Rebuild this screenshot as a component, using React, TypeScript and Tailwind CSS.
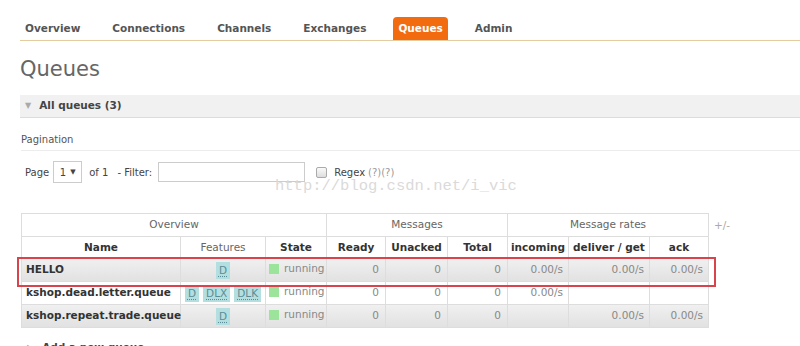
import React from 'react';

const tabs = ['Overview', 'Connections', 'Channels', 'Exchanges', 'Queues', 'Admin'];

type Queue = {
  name: string;
  features: string[];
  ready: number;
  unacked: number;
  total: number;
  incoming: string;
  deliver: string;
  ack: string;
};

const queues: Queue[] = [
  { name: 'HELLO', features: ['D'], ready: 0, unacked: 0, total: 0, incoming: '0.00/s', deliver: '0.00/s', ack: '0.00/s' },
  { name: 'kshop.dead.letter.queue', features: ['D', 'DLX', 'DLK'], ready: 0, unacked: 0, total: 0, incoming: '0.00/s', deliver: '', ack: '' },
  { name: 'kshop.repeat.trade.queue', features: ['D'], ready: 0, unacked: 0, total: 0, incoming: '', deliver: '0.00/s', ack: '0.00/s' },
];

function Badge({ label }: { label: string }) {
  return (
    <span className="inline-block bg-[#b3dfe0] text-[#5b8c95] px-[3px] leading-[17px] mx-[2px]">
      <span className="underline decoration-dotted underline-offset-2">{label}</span>
    </span>
  );
}

export default function App() {
  return (
    <div className="relative w-[800px] h-[346px] overflow-hidden bg-white text-[#555] font-['DejaVu_Sans',sans-serif]">
      {/* top navigation */}
      <div className="ml-[20px] mt-[17px] flex items-end gap-[22px] h-[24px] border-b border-[#e3cc9f]">
        {tabs.map((t) => (
          <div
            key={t}
            className={
              t === 'Queues'
                ? 'h-[23px] px-[5px] flex items-center rounded-t-[4px] bg-[#f26b0f] text-white text-[10.5px] font-bold'
                : 'h-[23px] px-[5px] flex items-center text-[#555] text-[10.5px] font-bold'
            }
          >
            {t}
          </div>
        ))}
      </div>

      <h1 className="ml-[20px] mt-[16px] text-[21px] leading-[24px] text-[#666] font-normal">Queues</h1>

      {/* section header */}
      <div className="ml-[20px] mt-[14px] h-[23px] flex items-center bg-[#f1f1f1] border-b border-[#dcdcdc]">
        <span className="ml-[5px] text-[#aaa] text-[8px]">▼</span>
        <span className="ml-[8px] text-[10.5px] font-bold text-[#444]">All queues (3)</span>
      </div>

      <div className="ml-[21px] mt-[14px] pb-[3px] text-[10px] text-[#555] border-b border-[#ececec]">Pagination</div>

      {/* pagination row */}
      <div className="ml-[25px] mt-[10px] flex items-center text-[10px] text-[#444] h-[22px]">
        <span>Page</span>
        <div className="ml-[4px] w-[29px] h-[22px] border border-[#ccc] flex items-center justify-center gap-[4px]">
          <span>1</span>
          <span className="text-[7px]">▼</span>
        </div>
        <span className="ml-[7px]">of 1</span>
        <span className="ml-[9px]">- Filter:</span>
        <div className="ml-[6px] w-[147px] h-[20px] border border-[#ccc]" />
        <div className="ml-[11px] w-[11px] h-[11px] rounded-[2px] border border-[#aaa] bg-gradient-to-b from-[#fafafa] to-[#ddd]" />
        <span className="ml-[7px]">Regex</span>
        <span className="ml-[3px] text-[#999]">(?)(?)</span>
      </div>

      {/* table */}
      <div className="ml-[21px] mt-[30px] flex items-start">
        <table className="border-collapse table-fixed w-[687px] text-[10.5px]">
          <colgroup>
            <col className="w-[159px]" />
            <col className="w-[85px]" />
            <col className="w-[61px]" />
            <col className="w-[59px]" />
            <col className="w-[62px]" />
            <col className="w-[60px]" />
            <col className="w-[61px]" />
            <col className="w-[81px]" />
            <col className="w-[59px]" />
          </colgroup>
          <thead>
            <tr className="h-[23px] text-[#666]">
              <th colSpan={3} className="border border-[#ddd] font-normal">Overview</th>
              <th colSpan={3} className="border border-[#ddd] font-normal">Messages</th>
              <th colSpan={3} className="border border-[#ddd] font-normal">Message rates</th>
            </tr>
            <tr className="h-[22px] text-[#333]">
              <th className="border border-[#ddd] font-bold">Name</th>
              <th className="border border-[#ddd] font-normal text-[#666]">Features</th>
              <th className="border border-[#ddd] font-bold">State</th>
              <th className="border border-[#ddd] font-bold">Ready</th>
              <th className="border border-[#ddd] font-bold">Unacked</th>
              <th className="border border-[#ddd] font-bold">Total</th>
              <th className="border border-[#ddd] font-bold">incoming</th>
              <th className="border border-[#ddd] font-bold">deliver / get</th>
              <th className="border border-[#ddd] font-bold">ack</th>
            </tr>
          </thead>
          <tbody>
            {queues.map((q, i) => (
              <tr
                key={q.name}
                className={
                  i % 2 === 0
                    ? 'h-[23px] bg-gradient-to-b from-[#f0f0f0] to-[#e1e1e1]'
                    : 'h-[23px] bg-white'
                }
              >
                <td className="border border-[#ddd] px-[4px] font-bold text-[#333] whitespace-nowrap">{q.name}</td>
                <td className="border border-[#ddd] text-center whitespace-nowrap">
                  {q.features.map((f) => (
                    <Badge key={f} label={f} />
                  ))}
                </td>
                <td className="border border-[#ddd] px-[3px] text-[#888]">
                  <span className="inline-flex items-center gap-[5px]">
                    <span className="w-[10px] h-[10px] bg-[#9ce49c]" />
                    running
                  </span>
                </td>
                <td className="border border-[#ddd] px-[6px] text-right text-[#888]">{q.ready}</td>
                <td className="border border-[#ddd] px-[6px] text-right text-[#888]">{q.unacked}</td>
                <td className="border border-[#ddd] px-[6px] text-right text-[#888]">{q.total}</td>
                <td className="border border-[#ddd] px-[5px] text-right text-[#888]">{q.incoming}</td>
                <td className="border border-[#ddd] px-[5px] text-right text-[#888]">{q.deliver}</td>
                <td className="border border-[#ddd] px-[5px] text-right text-[#888]">{q.ack}</td>
              </tr>
            ))}
          </tbody>
        </table>
        <span className="ml-[5px] mt-[5px] text-[10.5px] text-[#aaa]">+/-</span>
      </div>

      <div className="ml-[27px] mt-[12px] flex items-center text-[10.5px]">
        <span className="text-[#aaa] text-[8px]">▶</span>
        <span className="ml-[9px] font-bold text-[#444]">Add a new queue</span>
      </div>

      {/* annotation + watermark overlays */}
      <div className="absolute left-[17px] top-[257px] w-[699px] h-[30px] border-2 border-[#d8434c]" />
      <div className="absolute left-[275px] top-[175px] text-[15.5px] text-[#dadada] font-['Liberation_Mono',monospace] pointer-events-none">
        http://blog.csdn.net/i_vic
      </div>
    </div>
  );
}
